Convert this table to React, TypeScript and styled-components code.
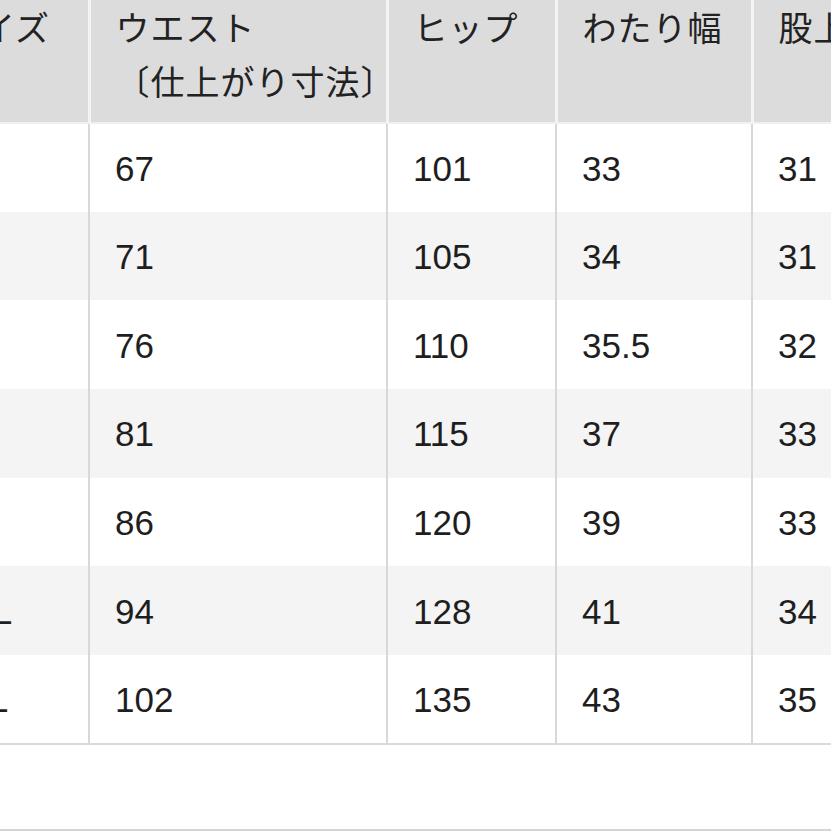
import React from "react";
import styled, { createGlobalStyle } from "styled-components";

const Global = createGlobalStyle`
  html, body { margin: 0; padding: 0; background: #fff; overflow: hidden; }
  body { font-family: "Liberation Sans", "Noto Sans CJK JP", sans-serif; color: #1c1c1c; }
`;

const Page = styled.div`
  width: 831px;
  height: 831px;
  overflow: hidden;
  display: flex;
  flex-direction: column;
`;

const Scroller = styled.div`
  margin-left: -79px;
  width: 1100px;
`;

const Table = styled.table`
  border-collapse: collapse;
  table-layout: fixed;
  width: 1050px;
  border-bottom: 2px solid #dadada;
`;

const HeadCell = styled.th<{ $w: number }>`
  width: ${(p) => p.$w}px;
  height: 123px;
  box-sizing: border-box;
  background: #dcdcdc;
  border-left: 3px solid #f4f4f4;
  border-bottom: 2px solid #f0f0f0;
  padding: 0 0 0 25px;
  vertical-align: top;
  text-align: left;
  font-family: "Noto Sans CJK JP", sans-serif;
  font-weight: 400;
  font-size: 34px;
  letter-spacing: 1px;
  line-height: 54px;
  color: #222;
  &:first-child { border-left: none; }
`;

const Row = styled.tr<{ $alt: boolean }>`
  background: ${(p) => (p.$alt ? "#f4f4f4" : "#ffffff")};
`;

const Cell = styled.td`
  height: 88.7px;
  box-sizing: border-box;
  padding: 2px 0 0 25px;
  border-left: 2px solid #d8d8d8;
  font-family: "Liberation Sans", sans-serif;
  font-size: 35px;
  color: #1e1e1e;
  vertical-align: middle;
  white-space: nowrap;
  &:first-child { border-left: none; }
`;

const Footer = styled.div`
  margin-top: 84px;
  border-top: 2px solid #d4d4d4;
  height: 10px;
`;

const cols = [
  { label: "サイズ", w: 168 },
  { label: "ウエスト\n〔仕上がり寸法〕", w: 298 },
  { label: "ヒップ", w: 169 },
  { label: "わたり幅", w: 196 },
  { label: "股上丈", w: 219 },
];

const rows = [
  ["XS", "67", "101", "33", "31"],
  ["S", "71", "105", "34", "31"],
  ["M", "76", "110", "35.5", "32"],
  ["L", "81", "115", "37", "33"],
  ["XL", "86", "120", "39", "33"],
  ["XXL", "94", "128", "41", "34"],
  ["3XL", "102", "135", "43", "35"],
];

export default function App() {
  return (
    <Page>
      <Global />
      <Scroller>
        <Table>
          <thead>
            <tr>
              {cols.map((c) => (
                <HeadCell key={c.label} $w={c.w}>
                  {c.label.split("\n").map((l, i) => (
                    <React.Fragment key={i}>
                      {i > 0 && <br />}
                      {l}
                    </React.Fragment>
                  ))}
                </HeadCell>
              ))}
            </tr>
          </thead>
          <tbody>
            {rows.map((r, i) => (
              <Row key={r[0]} $alt={i % 2 === 1}>
                {r.map((v, j) => (
                  <Cell key={j}>{v}</Cell>
                ))}
              </Row>
            ))}
          </tbody>
        </Table>
      </Scroller>
      <Footer />
    </Page>
  );
}
